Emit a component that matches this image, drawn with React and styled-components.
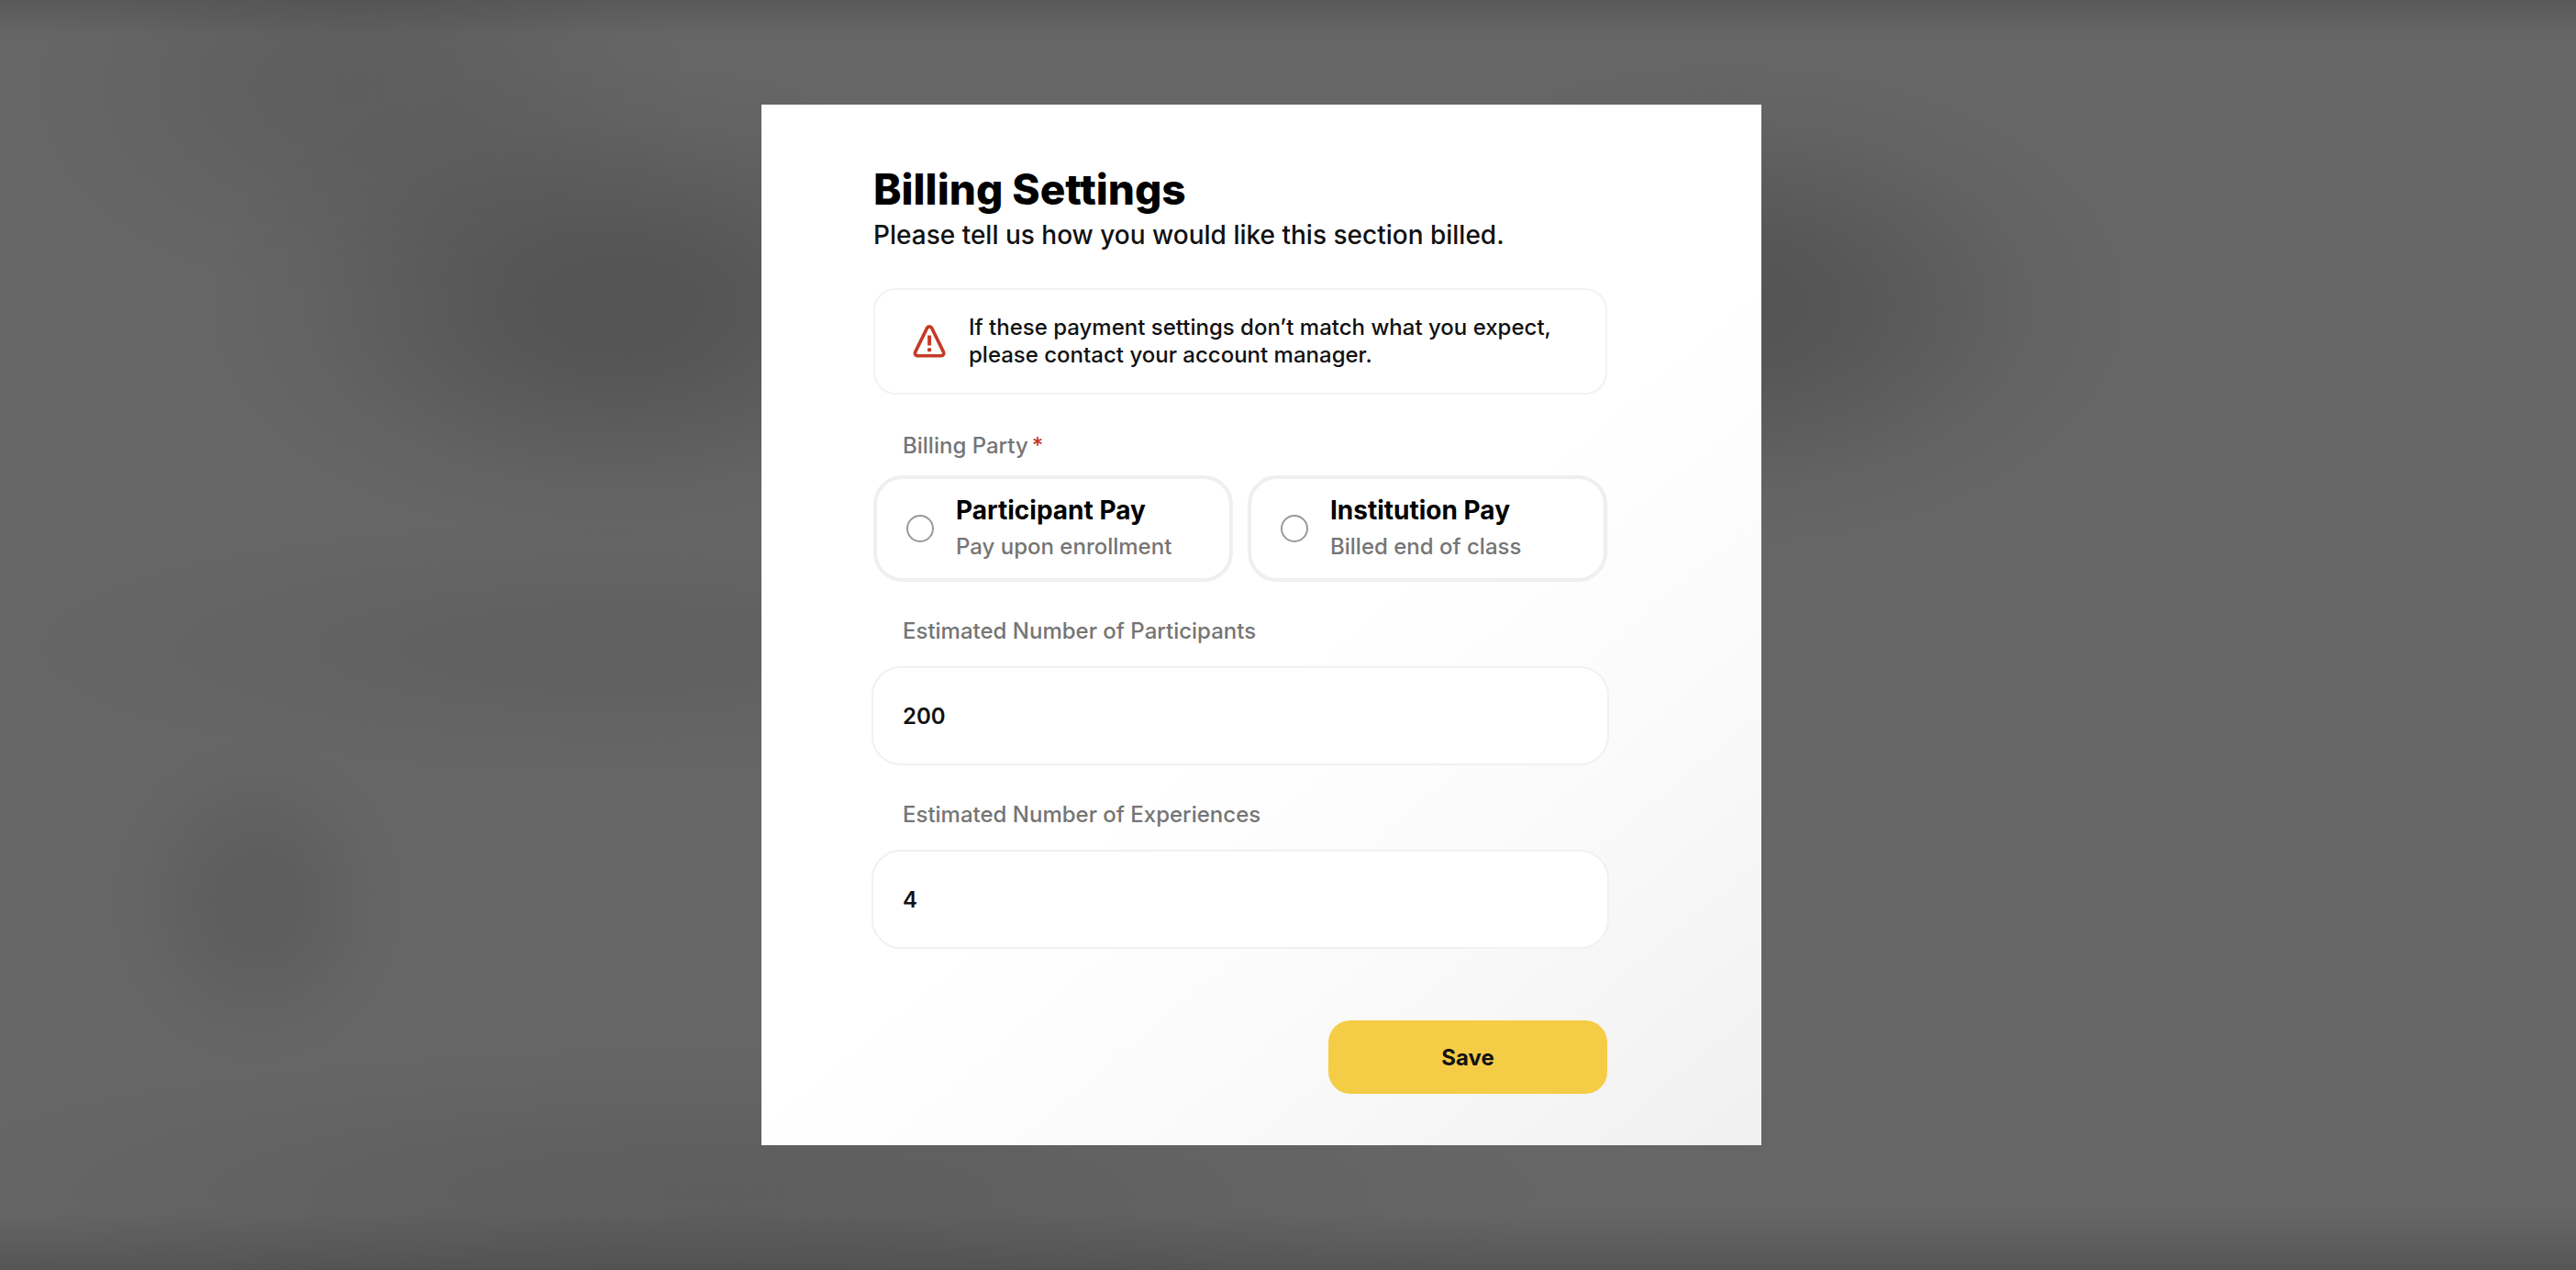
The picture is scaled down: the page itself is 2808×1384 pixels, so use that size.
import React, { useState } from 'react'
import styled, { createGlobalStyle } from 'styled-components'

const GlobalStyle = createGlobalStyle`
  *, *::before, *::after {
    box-sizing: border-box;
  }
  body {
    margin: 0;
    font-family: Inter, sans-serif;
    font-weight: 500;
    color: #111;
    background: #666;
  }
`

const options = [
  { id: 'participant', title: 'Participant Pay', text: 'Pay upon enrollment' },
  { id: 'institution', title: 'Institution Pay', text: 'Billed end of class' },
]

const WarningIcon = () => {
  return (
    <svg width="38" height="38" viewBox="0 0 38 38" fill="none" aria-hidden="true">
      <path
        d="M16.6 4.4a2.8 2.8 0 0 1 5 0l12.900 26.200c.8 2-.2 4.200-2.400 4.200H6.100c-2.200 0-3.200-2.200-2.400-4.200z"
        stroke="#c53a26"
        strokeWidth="3.600"
        strokeLinejoin="round"
      />
      <path d="M19.100 12.500v11" stroke="#c53a26" strokeWidth="4" />
      <circle cx="19.100" cy="28.200" r="2.200" fill="#c53a26" />
    </svg>
  )
}

const App = () => {
  const [party, setParty] = useState('')
  const [participants, setParticipants] = useState('200')
  const [experiences, setExperiences] = useState('4')

  return (
    <Overlay>
      <GlobalStyle />
      <Modal role="dialog" aria-labelledby="billing-title">
        <Title id="billing-title">Billing Settings</Title>
        <Subtitle>Please tell us how you would like this section billed.</Subtitle>
        <Notice>
          <WarningIcon />
          <p>
            If these payment settings don’t match what you expect,
            <br />
            please contact your account manager.
          </p>
        </Notice>
        <form onSubmit={(e) => e.preventDefault()}>
          <Party>
            <Legend>
              Billing Party<Required>*</Required>
            </Legend>
            <Options>
              {options.map(({ id, title, text }) => (
                <Option key={id} htmlFor={id}>
                  <Radio
                    id={id}
                    name="party"
                    checked={party === id}
                    onChange={() => setParty(id)}
                  />
                  <span>
                    <OptionTitle>{title}</OptionTitle>
                    <OptionText>{text}</OptionText>
                  </span>
                </Option>
              ))}
            </Options>
          </Party>
          <Field>
            <Label htmlFor="participants">Estimated Number of Participants</Label>
            <Input
              id="participants"
              value={participants}
              onChange={(e) => setParticipants(e.target.value)}
            />
          </Field>
          <Field>
            <Label htmlFor="experiences">Estimated Number of Experiences</Label>
            <Input
              id="experiences"
              value={experiences}
              onChange={(e) => setExperiences(e.target.value)}
            />
          </Field>
          <Actions>
            <SaveButton type="submit">Save</SaveButton>
          </Actions>
        </form>
      </Modal>
    </Overlay>
  )
}

// soft dark spot with an eased falloff
const shade = (size, position, alpha) => `radial-gradient(
  ${size} at ${position},
  rgba(0, 0, 0, ${alpha}),
  rgba(0, 0, 0, ${alpha * 0.9}) 25%,
  rgba(0, 0, 0, ${alpha * 0.55}) 50%,
  rgba(0, 0, 0, ${alpha * 0.18}) 75%,
  transparent
)`

const Overlay = styled.main`
  min-height: 100vh;
  display: grid;
  place-items: center;
  padding: 24px 58px 46px 0;
  background:
    linear-gradient(rgba(0, 0, 0, 0.12), transparent 40px),
    linear-gradient(to top, rgba(0, 0, 0, 0.16), transparent 64px),
    ${shade('460px 270px', '24% 24%', 0.18)},
    ${shade('450px 270px', '67% 24%', 0.18)},
    ${shade('170px 190px', '10% 71%', 0.09)},
    ${shade('700px 150px', '24% 51%', 0.06)},
    ${shade('380px 240px', '14% 7%', 0.08)},
    ${shade('960px 170px', '28% 94%', 0.08)},
    #666;
`

const Modal = styled.section`
  width: 100%;
  max-width: 1090px;
  padding: 62px 168px 56px 122px;
  background: linear-gradient(140deg, #fff 54%, #fafafa 74%, #f5f5f5 87%, #f0f0f0);
`

const Title = styled.h1`
  margin: 0;
  font-size: 46px;
  line-height: 60px;
  font-weight: 800;
  color: #000;
`

const Subtitle = styled.p`
  margin: 2px 0 0;
  font-size: 28px;
  line-height: 36px;
`

const Notice = styled.div`
  display: flex;
  align-items: center;
  gap: 24px;
  min-height: 116px;
  margin-top: 40px;
  padding: 0 40px;
  border: 2px solid #f2f2f2;
  border-radius: 24px;
  background: #fff;

  p {
    margin: 0;
    font-size: 24px;
    line-height: 30px;
  }
  svg {
    flex-shrink: 0;
  }
`

const Party = styled.fieldset`
  min-width: 0;
  margin: 38px 0 0;
  padding: 0;
  border: 0;
`

const Legend = styled.legend`
  padding: 0 0 0 32px;
  font-size: 24px;
  line-height: 36px;
  color: #757575;
`

const Required = styled.span`
  margin-left: 4px;
  color: #c53a26;
`

const Options = styled.div`
  display: grid;
  grid-template-columns: 1fr 1fr;
  gap: 16px;
  margin-top: 14px;
`

const Option = styled.label`
  display: flex;
  align-items: center;
  gap: 24px;
  min-height: 116px;
  padding: 0 32px;
  border: 4px solid #efefef;
  border-radius: 32px;
  background: #fff;
  cursor: pointer;
`

const Radio = styled.input.attrs({ type: 'radio' })`
  appearance: none;
  width: 30px;
  height: 30px;
  margin: 0;
  border: 2px solid #999;
  border-radius: 50%;
  background: #fff;

  &:checked {
    border: 9px solid #f5cc46;
  }
`

const OptionTitle = styled.strong`
  display: block;
  font-size: 28px;
  line-height: 40px;
  font-weight: 700;
  color: #000;
`

const OptionText = styled.span`
  display: block;
  font-size: 24px;
  line-height: 40px;
  color: #757575;
`

const Field = styled.div`
  margin: 36px -2px 0;
`

const Label = styled.label`
  display: block;
  padding-left: 34px;
  font-size: 24px;
  line-height: 36px;
  color: #757575;
`

const Input = styled.input.attrs({ type: 'text' })`
  display: block;
  width: 100%;
  height: 108px;
  margin-top: 20px;
  padding: 0 32px;
  border: 2px solid #f1f1f1;
  border-radius: 32px;
  background: #fff;
  font-family: inherit;
  font-size: 24px;
  font-weight: 600;
  color: #111;
`

const Actions = styled.div`
  display: flex;
  justify-content: flex-end;
  margin-top: 78px;
`

const SaveButton = styled.button`
  width: 304px;
  height: 80px;
  border: 0;
  border-radius: 24px;
  background: #f5cc46;
  font-family: inherit;
  font-size: 24px;
  font-weight: 700;
  color: #111;
  cursor: pointer;
`

export default App
